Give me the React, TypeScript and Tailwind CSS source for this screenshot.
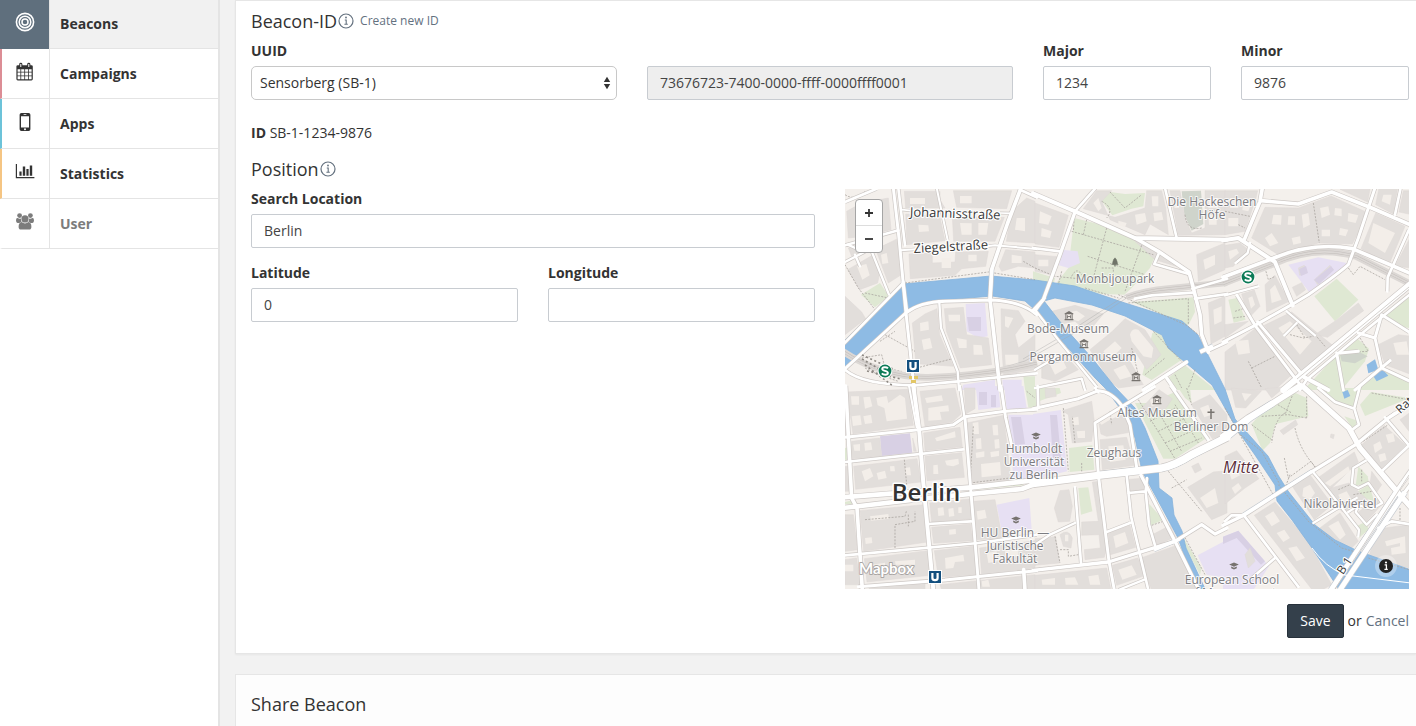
import React from 'react';

type Area = [fill: string, d: string];
type Road = [width: number, d: string];

interface Tile {
  x: number;
  y: number;
  areas: Area[];
  buildings: string;
  yards: string;
  rail?: string;
  roads: Road[];
  paths: string;
}

const PARK = '#dfe8d3';
const CAMPUS = '#e7e0f3';
const CAMPUS_DARK = '#d8d0e4';
const MEADOW = '#cfd4cb';
const WATER = '#8ebbe4';

// Tiles are drawn at three units per map pixel.
const TILES: Tile[] = [
  {
    x: 0,
    y: -1,
    areas: [
      [PARK, 'M48,320L105,285L132,325L90,358Z'],
      [CAMPUS, 'M362,348L420,345L428,445L400,450L365,430Z'],
      [CAMPUS, 'M355,590L450,575V606H350Z'],
      [CAMPUS, 'M472,575H530V606H474Z'],
      [PARK, 'M535,565H570V606H540Z'],
    ],
    buildings:
      'M5,70L50,45L130,30L138,125L60,145L10,150Z M178,10H285V35L300,60H182Z M325,8H500L485,62L335,58Z M182,78L284,84L300,158L186,170Z M322,86L478,88L450,160L326,160Z M192,198L262,194V225L330,222L332,192L430,190L422,235L350,242L330,262L196,272Z M8,245L82,202L105,250L98,285L44,305Z M92,184L158,152L166,262L130,285Z M482,185L570,192V240L520,235L470,250L462,235Z M500,70L545,30L570,40V165L484,160Z M0,325L50,372L62,392L0,440Z M202,405L240,378L276,362L284,440L325,535L225,528L212,520Z M298,362L355,358L365,440L430,450L440,530L346,540L304,430Z M468,362L520,368L540,400L510,440L520,480L570,440V545L476,560L470,470Z M10,180L40,172L48,190L20,205Z',
    yards:
      'M35,80L80,70L85,100L45,105Z M195,30H240V48H195Z M345,24H380V46H345Z M220,110L250,112L252,130L222,132Z M345,105L380,106V140L350,140Z M400,105L430,105L425,140L400,140Z M290,210H318V240H290Z M370,200L395,200V220H370Z M36,235L64,228L74,262L52,275Z M108,200L125,195L130,225L112,228Z M500,200L530,205V225H500Z M515,90L540,90V130L510,125Z M225,405L250,400L252,425L226,430Z M230,455L255,450L262,480L236,486Z M310,380H345V400H312Z M335,450L365,455V480L342,480Z M385,470L410,472L414,500L386,500Z M480,385L505,390L490,420L480,415Z M480,500L520,500V530H482Z',
    rail: 'M-6,490C60,535 160,570 250,568S480,550 576,525',
    roads: [
      [8, 'M0,42L95,2'],
      [8, 'M0,172L160,127'],
      [7, 'M0,222L58,192L8,170M30,200L45,235M80,190L132,320'],
      [8, 'M-6,470L175,285'],
      [9, 'M-6,548L182,375Q225,342 300,340L440,336Q530,340 575,380'],
      [9, 'M145,0L162,150L183,375L208,606'],
      [8, 'M160,0L180,172'],
      [11, 'M528,0L488,105L440,245L435,335L465,606'],
      [5, 'M170,65L200,68M465,75L500,76'],
      [6, 'M168,187L210,184M430,174L450,172L575,183M275,0L308,156'],
      [8, 'M525,5L575,28'],
      [7, 'M283,345L288,420L338,550L342,606'],
      [8, 'M0,545Q50,590 210,592L340,580L575,556'],
    ],
    paths:
      'M180,285L430,252L570,275M60,315L130,330M0,230L40,300L90,365M120,440L210,490M215,540L330,510M105,460L150,430M535,220L570,240M0,20Q30,40 60,10M50,510L110,500L120,540L170,550M60,540L100,560L160,580',
  },
  {
    x: 190,
    y: -1,
    areas: [
      [PARK, 'M118,90L205,112L350,175L362,200L345,240L290,300L268,320L200,318L60,290L100,240Z'],
      [PARK, 'M-6,250L60,270L56,292L-6,276Z'],
      [PARK, 'M290,342L476,328L480,372L460,412Z'],
      [PARK, 'M200,38L225,12L270,18L330,15L325,55L290,62L232,82Z'],
      [MEADOW, 'M440,10L498,8L505,108L470,128L448,80Z'],
      [PARK, 'M352,435L368,428L440,515L350,576L322,560Z'],
      [PARK, 'M448,530L542,606H410L400,570Z'],
      [CAMPUS, 'M80,185L128,190L135,225L100,240L72,232Z'],
    ],
    buildings:
      'M0,45L100,82L72,178L0,168Z M145,62L185,8H230L200,40L225,95L330,140L345,108L400,140L392,60L380,8H335L330,60L240,88Z M405,8H435L450,90L470,135L510,120V8H570V140L430,142Z M485,200L570,165V245L490,280Z M520,345L570,325V445L528,468Z M0,200L68,206L56,262L0,250Z M42,372L120,352L205,378L160,432L120,400L60,412Z M165,485L232,430L270,392L330,425L378,500L335,545L300,490L285,520L325,590L250,600L225,580Z M20,520L90,500L130,545L60,580L20,570Z M300,160L350,180L440,240L360,215Z',
    yards:
      'M15,70L50,85L40,110L12,105Z M20,120L50,130L45,150L18,145Z M175,45L190,30L200,60L190,70Z M250,98L275,105L270,118L250,112Z M300,80L330,75L335,100L305,110Z M350,25H370V55H352Z M355,75L380,72L385,95L358,100Z M415,30H432V60H418Z M520,30H550V60H520Z M520,80H545V110H522Z M505,215L540,200V230L510,245Z M535,365L560,355V400L538,410Z M10,215H40V235H10Z M90,375L125,368L150,385L130,400L100,390Z M205,490L240,460L260,480L225,515Z M285,440Q290,420 310,425L355,480L350,510L325,505L290,460Z M45,530L85,520L95,540L60,560Z M235,545L270,530L290,565L255,575Z',
    rail: 'M576,284L400,302Q330,308 275,328',
    roads: [
      [12, 'M-6,16L120,70L300,150L576,155'],
      [10, 'M120,72L75,200L25,335L-6,368'],
      [8, 'M120,70L182,0M390,0L425,150M-6,180L75,190'],
      [11, 'M300,150L370,190L462,252L475,300L495,380L500,440L520,492'],
      [8, 'M372,195L358,228L462,258M520,488L576,462M480,332L576,318'],
      [8, 'M300,332L350,322L472,314M472,302L576,272'],
      [11, 'M325,606L455,522'],
      [10, 'M395,570L420,606'],
      [7, 'M0,365L70,455L185,596M0,600L140,572L150,606M0,545L60,510'],
    ],
    paths:
      'M110,130L355,200M158,205L330,260M215,120L175,270M155,95L145,140M320,172L270,310M118,80L115,130M80,250L70,290M0,240L60,265L160,275M110,265Q125,235 140,260M200,40Q240,60 215,90M225,12L270,60L320,20M280,345L460,332V410M250,320L455,412L490,440M450,80Q455,130 500,120M355,430L440,520M290,480L310,560M200,240H235V260M330,560L390,510M420,560L440,600M480,545L460,600M150,300L250,330',
  },
  {
    x: 380,
    y: -1,
    areas: [
      [CAMPUS, 'M190,230L280,208L365,225L345,250L255,316Z'],
      [PARK, 'M268,325L335,272L400,335L330,400Z'],
      [PARK, 'M10,335L36,330L62,395L26,404Z'],
      [PARK, 'M212,410L268,445L225,492L182,440Z'],
      [PARK, 'M345,490L395,450L432,482L420,520L350,606H236Z'],
      [PARK, 'M474,380L552,330V420L520,415Z'],
      [PARK, 'M385,606L480,545L560,585V606Z'],
      [MEADOW, 'M345,500L398,490L428,505L390,526L350,520Z'],
      [WATER, 'M425,530L450,514L460,545L430,556Z'],
      [WATER, 'M443,562L474,545L490,563L455,580Z'],
    ],
    buildings:
      'M0,8H98L92,34L60,130L0,140Z M120,58L220,60L318,24L430,75L382,168L280,165L160,200L80,150Z M452,75L540,115L492,230L408,182Z M345,4H435L428,42Z M462,0L518,0L505,78L452,50Z M535,8H560V80L522,72Z M202,298L230,284L242,305L215,325Z M220,240L238,232L245,255L224,262Z M268,275L315,232L325,245L278,290Z M120,290L150,262L192,340L125,372Z M50,318L88,306L105,355L76,385L62,360Z M118,412L200,372L330,478L228,562Z M0,492L90,422L200,560L150,606H0Z M332,398L400,345L416,368L308,448L270,440Z M460,470L520,440L560,445V560L480,530Z M0,172L45,165L70,185L25,235L0,240Z M560,140V240L510,235Z M0,410L70,400L0,450Z',
    yards:
      'M15,30H40V60H15Z M55,40L80,42L70,70L52,66Z M10,90H40V115H10Z M145,80L170,82L168,110L140,108Z M190,85L210,85V110H188Z M230,80L250,75L255,110L235,120Z M285,60L310,55L315,80L290,90Z M330,60L350,62V85L328,82Z M370,75L400,82L392,105L368,100Z M120,150L140,135L160,165L135,175Z M200,150L225,145L228,165L205,170Z M290,125L315,125V145H290Z M345,120L370,125L362,145L342,140Z M445,105L510,135L480,195L430,165Z M475,20H500L495,50L470,40Z M135,305L150,290L170,335L140,345Z M70,330L82,325L90,350L78,362Z M160,420L195,400L260,460L225,500Z M30,460L70,455L75,495L40,500Z M505,465L545,460L552,500L515,500Z M10,190L35,182L42,195L15,215Z',
    rail: 'M-6,287L140,230Q270,168 395,206L560,290',
    roads: [
      [11, 'M-6,268L140,213Q260,160 382,182L560,258'],
      [12, 'M-6,157L40,150L150,222L203,352'],
      [11, 'M112,0L105,40L58,155'],
      [11, 'M108,38L220,48L320,12L440,60L560,112'],
      [9, 'M450,0L400,150L370,230Q330,265 250,320L200,350L90,412L-6,462'],
      [8, 'M527,0L510,80M552,125L488,268L487,310'],
      [9, 'M36,322L90,412L225,590M98,402L240,570'],
      [7, 'M185,370L270,442M215,405L178,442M75,165L68,195L32,225M0,322L100,295'],
      [9, 'M400,435L450,450L470,380L552,432M335,495L355,606M450,450L470,540L560,582M390,606L495,518'],
      [12, 'M225,560L310,606'],
      [18, 'M560,285L410,410L212,575L175,606'],
      [8, 'M560,315L430,420L245,575L225,606'],
      [9, 'M345,495L400,490'],
    ],
    paths:
      'M265,45L283,165M370,240L385,260L405,235L480,275M120,240L130,275L150,265M30,370L60,360M25,390L60,385M195,440L235,450L265,445M215,410L240,450M405,450L430,490L340,495M70,520L110,600M80,540L150,505M0,70L75,85M270,440L300,475M40,110L60,120',
  },
  {
    x: 0,
    y: 199,
    areas: [
      [CAMPUS, 'M392,-6H460L466,58L400,66Z'],
      [CAMPUS, 'M478,-6H535L545,60L485,64Z'],
      [CAMPUS_DARK, 'M105,145L195,136L202,194L110,204Z'],
      [CAMPUS, 'M490,80H575V285L505,270Z'],
      [CAMPUS, 'M455,350L553,330L560,425L470,430Z'],
      [PARK, 'M540,0H575V60L550,58Z'],
      [PARK, 'M0,180L10,178V215H0Z'],
      [PARK, 'M0,342L25,336V348H0Z'],
      [PARK, 'M382,298L535,285V292L384,306Z'],
    ],
    buildings:
      'M5,12L190,4L205,112L24,138Z M225,10L330,0L348,78L322,102L240,115Z M358,0H390V62L362,78Z M20,160L104,150L110,204L20,212Z M203,150L214,190H206Z M236,135L345,118L352,176L240,188Z M365,105L476,82L498,275L380,285Z M26,235L216,212L228,282L32,304Z M240,205L350,194L358,268L246,278Z M45,368L236,350L248,462L56,490Z M254,345L374,333L380,392L260,402Z M260,418L376,408L384,458L266,466Z M58,512L248,488L256,562L66,582Z M268,488L390,474L398,560L280,568Z M404,480L570,458V540L410,562Z M384,340L450,335L468,430L520,432L522,445L390,456Z M72,596L240,582V606H72Z M285,590L570,560V606H290Z M0,515L35,510L45,590H0Z M0,20H4L12,140L0,142Z M0,380H25L38,485L0,490Z M0,235H16L20,310H0Z',
    yards:
      'M18,25H42V50H20Z M55,28L75,26L82,55L60,62Z M94,30L125,24L130,45L165,20L180,30L186,92L125,100L118,60L98,52Z M20,85L46,82L50,110L24,114Z M55,85L78,80L82,105L60,108Z M240,30L290,22L294,38L245,45Z M250,60L310,52L312,70L285,72L290,95L250,98Z M25,170L45,168V188H28Z M58,165L78,163L82,185L60,188Z M270,150L330,130L332,148L275,160Z M383,105L400,102L402,138L385,138Z M442,112L458,110L460,142L445,142Z M392,152L408,150L410,182L394,184Z M448,155L462,153L464,180L450,182Z M392,194L418,190V206L394,210Z M436,192L462,188V204L438,208Z M408,228L465,222L468,262L410,268Z M50,250L75,240L85,265L60,280Z M95,255L120,248L125,270L100,275Z M135,235L148,234L150,250L136,250Z M180,240L195,238L198,262L184,262Z M265,232L278,230L280,258L265,258Z M300,218L340,212L342,228L325,235L305,232Z M75,385L130,378L132,392L78,398Z M60,450L80,448L82,465L62,468Z M278,360L295,358L298,382L280,384Z M310,362L325,360L328,384L312,386Z M340,358L350,358V375H340Z M312,425L332,423L333,438L313,440Z M80,530L120,524V545H84Z M150,520L210,515V530H152Z M300,510L355,500L358,520L330,522L325,540L302,542Z M425,495L455,490L458,520L430,525Z M480,488L520,484V505H482Z M395,370L420,365L425,390L398,395Z M410,580L430,575L435,596H412Z M0,530H25V550H0Z',
    roads: [
      [11, 'M2,-6L20,330L36,360L52,606'],
      [12, 'M205,-6L222,120L235,285L265,606'],
      [6, 'M192,-6L215,118'],
      [9, 'M0,148L220,125L325,110L360,86L480,70L575,64'],
      [8, 'M0,222L355,184'],
      [9, 'M360,90L376,290L402,606'],
      [7, 'M345,-6L358,86'],
      [9, 'M468,-6L482,90L502,180'],
      [8, 'M0,502L400,465L575,440M250,408L378,400'],
      [9, 'M40,596L300,576L575,548'],
      [11, 'M536,545L540,606'],
      [14, 'M-6,328L380,298L575,276'],
      [14, 'M-6,360L250,330L530,303L575,286'],
    ],
    paths:
      'M178,215L185,290M385,300L535,288M60,395L180,385L184,370M150,480V410L210,400V370M190,380V415M545,10L570,30M385,115L375,285L495,270',
  },
  {
    x: 190,
    y: 199,
    areas: [
      [CAMPUS, 'M-6,78L78,66L96,250L-6,275Z'],
      [CAMPUS, 'M488,502L576,455V570L515,560Z'],
      [PARK, 'M102,180L172,172L178,245L104,252Z'],
      [PARK, 'M130,300L160,298L172,370L138,380Z'],
      [PARK, 'M12,0H74L78,15L12,40Z'],
      [PARK, 'M340,345L385,395L348,412Z'],
      [PARK, 'M300,45L345,45L420,12L515,150L420,212L385,212Z'],
      [PARK, 'M430,0H465L470,45L450,30Z'],
      [PARK, 'M440,440L500,540L495,560L440,455Z'],
    ],
    buildings:
      'M82,68L170,40L178,100L170,160L112,165L100,80Z M192,108L265,80L290,132L215,145L198,138Z M195,155L275,148L298,232L202,245Z M75,308L102,305L112,355L104,400L70,402L58,360Z M172,282L195,280L215,480L208,508L150,515L148,485L196,480L192,440L140,442L140,402L190,400Z M75,440Q100,420 112,450L108,480L85,475Z M220,435L285,412L302,478L226,500Z M312,512L430,470L500,606H350Z M232,532L308,510L332,562L245,592Z M458,298L535,252L576,248V375L530,395Z M0,452L62,446L74,525L0,532Z M0,562L215,540L228,606H0Z M352,440L406,412L422,446L368,470Z M468,48L525,20L576,80V140L532,152Z M318,62L372,5L412,32L392,62L332,80Z M470,235L490,225L500,245L480,255Z M270,275L330,270L332,305L280,308Z M30,2L60,0L64,25L32,30Z',
    yards:
      'M110,90L130,86L132,110L114,112Z M125,130L150,128V150H128Z M180,90L210,75L225,95L200,110Z M220,175L265,172L272,215L225,222Z M495,330L540,300L550,345L515,360Z M250,545L290,532L305,560L262,575Z M20,575L60,570V590H22Z M90,570L120,568L130,590H92Z M160,565L190,560L196,590H165Z M345,35L370,25L378,45L350,55Z M90,440L100,440V460H90Z M495,60L520,50L530,80L508,88Z M235,445L270,432L280,465L242,480Z',
    roads: [
      [9, 'M-6,62L130,32L190,8Q230,10 262,55L285,110L305,238'],
      [9, 'M358,-4L180,105L190,260L222,520L238,606'],
      [8, 'M180,0L190,12M8,-6L10,60'],
      [9, 'M408,-6L520,155'],
      [8, 'M120,298L138,525'],
      [10, 'M-6,547L220,522L420,460L500,410L540,438L576,420'],
      [10, 'M318,262L420,460L492,606'],
      [8, 'M275,262L288,385L340,606M280,315L332,310L336,270M332,310L342,410L360,472M215,432L285,405'],
      [7, 'M0,470L45,440L120,405M250,606L328,575'],
      [22, 'M-6,287L190,262L380,240Q420,232 470,200L576,148'],
    ],
    paths:
      'M85,60L100,250M120,165L112,85M60,445L75,525M75,485H100V505L130,500M140,225V250M225,70L230,110M310,35L420,212M345,100L420,60M370,130L450,90M390,165L480,125M405,190L500,150M420,50L490,165M375,80L440,190M455,0L470,50M350,412L385,400M445,440L510,560M400,250L500,370M410,300L455,275',
  },
  {
    x: 380,
    y: 199,
    areas: [
      [PARK, 'M80,108L120,62L200,10L245,30L250,85L152,108L135,165L112,188Z'],
      [PARK, 'M268,0L402,0L395,60L345,48L320,30Z'],
      [PARK, 'M405,50L438,12L552,30L510,48L420,84Z'],
      [PARK, 'M358,85L398,98L385,125Z'],
      [PARK, 'M400,235L428,265L432,288L392,292Z'],
      [PARK, 'M385,318L432,290L448,340L400,325Z'],
      [PARK, 'M395,415L424,400L430,425L402,450Z'],
      [PARK, 'M368,596H450V606H360Z'],
      [CAMPUS, 'M-6,446L40,428L132,535L85,606H-6Z'],
      [CAMPUS_DARK, 'M-6,446L40,428L120,520L108,530L35,450L-6,468Z'],
      [WATER, 'M352,12L368,6L376,24L358,32Z'],
    ],
    buildings:
      'M0,205L35,188L102,272L60,300L0,348Z M88,382L150,342L250,460L320,590L290,606H262Z M200,292L256,262L322,350L268,395Z M275,272L388,192L400,222L308,312Z M282,422L345,375L400,460L372,488Z M408,172L478,112L542,172L470,242Z M440,480L480,420L552,410V540L430,510Z M300,305L372,285L445,350L352,372Z M18,0L110,8L62,60L32,58Z M165,128L212,96L218,110L175,140Z M400,372L460,330L470,350L425,400Z M318,138L328,140L325,152L316,148Z M60,500L75,480L90,520L70,540Z M440,250L470,290L450,320L435,290Z M120,2L180,-4L140,30Z M525,95L560,70V140Z',
    yards:
      'M10,245L30,235L45,262L20,275Z M20,300L40,285L50,300L30,318Z M120,385L145,370L165,400L140,415Z M155,435L178,425L195,450L175,462Z M190,480L215,475L240,510L215,520Z M235,300L255,290L270,315L255,335L232,325Z M300,285L370,235L375,250L315,295Z M310,415L340,398L362,440L345,455Z M445,170L465,160L472,180L450,195Z M482,140L505,135L510,160L490,165Z M460,200L480,195L485,215L466,222Z M480,460L540,445L542,495L500,500L498,480L525,475V465L485,475Z M340,320L365,310L380,335L350,345Z M50,15L80,18L60,40Z',
    roads: [
      [10, 'M-6,412L60,380L262,250L392,170L490,90L560,45'],
      [18, 'M225,-6L140,48L70,90L-6,145'],
      [8, 'M55,380L220,596M150,510L75,575M0,400L20,382H50'],
      [7, 'M262,250L312,310L402,425L400,445M422,218L385,240L380,290L400,300L430,285L472,345L440,362L400,352L370,372M265,405L330,365L395,330M400,352L392,372L425,410L455,380'],
      [8, 'M460,420L500,400L560,410M480,88L552,172L470,250M280,0L330,42L388,62L402,110L375,130M405,-6L388,60M490,90L510,75'],
      [16, 'M232,-6L372,120L405,180L520,315L562,362'],
      [12, 'M560,245L500,330L318,606'],
      [10, 'M560,285L515,345L345,606'],
    ],
    paths:
      'M80,110L140,155M110,85L190,80L245,90M150,45L200,75M205,15L180,80M245,25V90M180,75Q150,90 140,165M178,210L190,270L258,220L275,245M160,290L250,400L350,480L420,500M340,305L375,290M40,135L110,190L165,290M0,60L150,330M415,160L490,110M440,15L550,35M525,360V400M195,260L180,300M410,245V280M385,320L440,310M430,510L552,545M210,120Q225,190 275,240',
  },
];

const RIVER =
  'M-2,153L58,95L146,87L190,91L230,97L280,114L337,132L353,146L363,166L380,200L390,230L413,256L423,267L433,286L443,302L470,336L490,351L513,362L566,381V402H495L467,359L447,331L432,312L430,296L410,266L393,242L380,219L367,196L347,179L323,159L317,146L280,127L247,116L210,109L199,112L220,139L247,169L270,198L290,219L300,239L313,272L314,299L327,309L329,326L337,342L341,359L361,402H352L333,349L317,319L297,282L290,249L280,226L260,199L250,189L223,159L190,121L180,112L147,107L100,111L70,117L50,132L-2,181Z';

const BRIDGES: Road[] = [
  [3, 'M58,92L62,124M147,80L145,112M200,108L190,122'],
  [4, 'M355,163L368,157'],
  [6, 'M253,286L317,279Q330,277 347,266L382,248L405,229L428,214'],
  [3, 'M398,326L467,282M309,361L335,350'],
  [5, 'M486,401L552,303M495,401L560,303'],
];

interface PlaceLabel {
  x: number;
  y: number;
  lines: string[];
}

const PLACES: PlaceLabel[] = [
  { x: 367, y: 17, lines: ['Die Hackeschen', 'Höfe'] },
  { x: 270, y: 94, lines: ['Monbijoupark'] },
  { x: 223, y: 144, lines: ['Bode-Museum'] },
  { x: 238, y: 172, lines: ['Pergamonmuseum'] },
  { x: 312, y: 228, lines: ['Altes Museum'] },
  { x: 366, y: 242, lines: ['Berliner Dom'] },
  { x: 269, y: 268, lines: ['Zeughaus'] },
  { x: 189, y: 264, lines: ['Humboldt', 'Universität', 'zu Berlin'] },
  { x: 170, y: 348, lines: ['HU Berlin —', 'Juristische', 'Fakultät'] },
  { x: 495, y: 319, lines: ['Nikolaiviertel'] },
  { x: 387, y: 395, lines: ['European School', 'of Management'] },
];

const MUSEUMS: [number, number][] = [
  [224, 127],
  [239, 155],
  [291, 188],
  [312, 211],
];

const SCHOOLS: [number, number][] = [
  [191, 247],
  [171, 331],
  [389, 377],
];

function tileTransform(tile: Tile) {
  return `translate(${tile.x} ${tile.y}) scale(0.33333)`;
}

function SBahn({ x, y }: { x: number; y: number }) {
  return (
    <g transform={`translate(${x} ${y})`}>
      <circle r="7.4" fill="#fff" />
      <circle r="6.4" fill="#0b7a56" />
      <path
        d="M3,-2.6C1.6,-4.2 -2.8,-4.3 -2.8,-1.9C-2.8,0.4 2.9,-0.6 2.9,2C2.9,4.4 -1.8,4.2 -3.2,2.4"
        fill="none"
        stroke="#fff"
        strokeWidth="1.9"
      />
    </g>
  );
}

function UBahn({ x, y }: { x: number; y: number }) {
  return (
    <g transform={`translate(${x} ${y})`}>
      <rect x="-7" y="-7" width="14" height="14" fill="#fff" />
      <rect x="-6" y="-6" width="12" height="12" fill="#14507f" />
      <path d="M-2.6,-4V1Q-2.6,3.2 0,3.2T2.6,1V-4" fill="none" stroke="#fff" strokeWidth="2.2" />
    </g>
  );
}

function CityMap() {
  return (
    <svg
      viewBox="0 0 564 400"
      preserveAspectRatio="xMidYMid slice"
      className="block h-full w-full font-['Open_Sans',sans-serif]"
      role="img"
      aria-label="Map of Berlin"
    >
      <rect x="-600" y="-400" width="1800" height="1200" fill="#f4f0ec" />
      {TILES.map((t, i) => (
        <g key={i} transform={tileTransform(t)}>
          {t.areas.map(([fill, d], k) => (
            <path key={k} d={d} fill={fill} />
          ))}
          <path d={t.buildings} fill="#e2dedb" stroke="#ded9d6" strokeWidth="1.5" />
          <path d={t.yards} fill="#f3eee9" />
        </g>
      ))}
      <g fill={CAMPUS_DARK}>
        <path d="M122,128H136V142H124Z M454,80L461,77L463,84L456,87Z M469,91L486,77L489,81L474,95Z M205,226H212L216,270L208,272Z M166,228H176L180,255L170,256Z M134,203H142V216H134Z M146,206H151V218H146Z" />
      </g>
      <path d={RIVER} fill={WATER} stroke="#85b3dc" strokeWidth="0.8" />
      <path
        d="M283,108L226,146L180,172L140,184M281,106L224,143L178,170"
        fill="none"
        stroke="#a8a8a8"
        strokeOpacity="0.6"
        strokeWidth="0.7"
      />
      {TILES.map((t, i) => (
        <g key={i} transform={tileTransform(t)} fill="none">
          <path d={t.paths} stroke="#a9a5a0" strokeWidth="2.4" strokeDasharray="6 4" />
          {t.rail && (
            <>
              <path d={t.rail} stroke="#dcd8d5" strokeWidth="20" />
              <path d={t.rail} stroke="#c4bfbc" strokeWidth="8" />
              <path d={t.rail} stroke="#dcd8d5" strokeWidth="5" />
            </>
          )}
        </g>
      ))}
      {TILES.map((t, i) => (
        <g key={i} transform={tileTransform(t)} fill="none" stroke="#cdc8c5" strokeLinejoin="round">
          {t.roads.map(([w, d], k) => (
            <path key={k} d={d} strokeWidth={w + 4} />
          ))}
        </g>
      ))}
      <g fill="none" stroke="#c5cad0">
        {BRIDGES.map(([w, d], k) => (
          <path key={k} d={d} strokeWidth={w + 1.4} />
        ))}
      </g>
      {TILES.map((t, i) => (
        <g key={i} transform={tileTransform(t)} fill="none" stroke="#fff" strokeLinejoin="round" strokeLinecap="round">
          {t.roads.map(([w, d], k) => (
            <path key={k} d={d} strokeWidth={w} />
          ))}
        </g>
      ))}
      <g fill="none" stroke="#fff">
        {BRIDGES.map(([w, d], k) => (
          <path key={k} d={d} strokeWidth={w} />
        ))}
      </g>
      <g fill="none" stroke="#c9c4c0" strokeWidth="0.8">
        <path d="M564,98L452,190M564,286L490,400" />
      </g>
      <path d="M467,359Q480,378 500,386L566,394" fill="none" stroke="#fff" strokeWidth="1" />
      <g stroke="#8d8883" strokeWidth="0.9" strokeDasharray="2 2.5" fill="none">
        <path d="M17,166L48,180M17,170L52,190M20,176L48,197M22,182L56,190" strokeWidth="1.6" />
      </g>
      <g fill="#e3c766">
        <rect x="64" y="187" width="3" height="3" />
        <rect x="69" y="187" width="4" height="3" />
        <rect x="66" y="191" width="5" height="3" />
      </g>

      <g
        fontSize="12"
        fill="#7c7c80"
        stroke="#fff"
        strokeOpacity="0.75"
        strokeWidth="2"
        paintOrder="stroke"
        strokeLinejoin="round"
        textAnchor="middle"
      >
        {PLACES.map((p) =>
          p.lines.map((line, k) => (
            <text key={line} x={p.x} y={p.y + k * 13}>
              {line}
            </text>
          )),
        )}
      </g>
      <g
        fontSize="12"
        fill="#3a3a3a"
        stroke="#fff"
        strokeWidth="2.2"
        paintOrder="stroke"
        strokeLinejoin="round"
        textAnchor="middle"
      >
        <text fontSize="13" transform="translate(110 29) rotate(2)">
          Johannisstraße
        </text>
        <text fontSize="13" transform="translate(106 62) rotate(-3)">
          Ziegelstraße
        </text>
        <text transform="translate(503 379) rotate(-56)">B 1</text>
        <text transform="translate(562 219) rotate(-42)">Rat</text>
      </g>
      <text
        x="396"
        y="284"
        fontSize="16"
        fontStyle="italic"
        fill="#5b2f3c"
        stroke="#fff"
        strokeWidth="2"
        paintOrder="stroke"
        textAnchor="middle"
      >
        Mitte
      </text>
      <text
        x="81"
        y="312"
        fontSize="24"
        fontWeight="600"
        fill="#333"
        stroke="#fff"
        strokeWidth="3"
        paintOrder="stroke"
        strokeLinejoin="round"
        textAnchor="middle"
      >
        Berlin
      </text>

      {MUSEUMS.map(([x, y]) => (
        <g key={x} transform={`translate(${x} ${y})`} fill="#77736f">
          <path d="M0,-5L4.4,-2.6V-1.8H-4.4V-2.6Z M-3.6,-1.8H-2.6V3H-3.6Z M2.6,-1.8H3.6V3H2.6Z M-4.4,3H4.4V4.2H-4.4Z" />
          <path d="M-1.5,2.4V-0.4L0,1L1.5,-0.4V2.4" fill="none" stroke="#77736f" strokeWidth="0.9" />
        </g>
      ))}
      {SCHOOLS.map(([x, y]) => (
        <g key={x} transform={`translate(${x} ${y})`} fill="#77736f">
          <path d="M0,-3.6L4.8,-1.4L0,0.8L-4.8,-1.4Z M-2.8,0.4L0,1.7L2.8,0.4V2.2L0,3.6L-2.8,2.2Z" />
        </g>
      ))}
      <path
        transform="translate(270 73)"
        fill="#6f7468"
        d="M0,-4.5L2.4,-1.6H1.5L3.2,0.6H2L3.6,2.8H0.6V4.4H-0.6V2.8H-3.6L-2,0.6H-3.2L-1.5,-1.6H-2.4Z"
      />
      <path d="M366,220V230M362.5,223.3H369.5" stroke="#77736f" strokeWidth="1.5" />

      <SBahn x={403} y={88} />
      <SBahn x={40} y={182} />
      <UBahn x={68} y={177} />
      <UBahn x={90} y={388} />

      <text
        x="14"
        y="385"
        fontSize="15"
        fontWeight="700"
        fill="#fff"
        stroke="#a9a5a3"
        strokeWidth="1.8"
        paintOrder="stroke"
        strokeLinejoin="round"
        className="font-[Lato,sans-serif]"
      >
        Mapbox
      </text>
    </svg>
  );
}

function InfoIcon() {
  return (
    <svg viewBox="0 0 16 16" className="ml-px size-4 shrink-0" fill="none" stroke="#64717f" aria-hidden="true">
      <circle cx="8" cy="8" r="7" strokeWidth="1.2" />
      <path d="M6.8,7H8.2V11.2M6.4,11.3H9.8" strokeWidth="1.1" />
      <circle cx="8" cy="4.5" r="0.9" fill="#64717f" stroke="none" />
    </svg>
  );
}

function BeaconIcon() {
  return (
    <svg viewBox="0 0 20 20" className="size-5" fill="none" stroke="#fff" aria-hidden="true">
      <circle cx="10" cy="10" r="8.6" strokeWidth="1.6" />
      <circle cx="10" cy="10" r="5.8" strokeWidth="1.5" />
      <circle cx="10" cy="10" r="3" strokeWidth="1.5" />
    </svg>
  );
}

function CalendarIcon() {
  return (
    <svg viewBox="0 0 20 20" className="size-5" aria-hidden="true">
      <path
        fill="currentColor"
        fillRule="evenodd"
        d="M2.8,3.2H4.2V2.2Q4.2,0.8 5.8,0.8T7.4,2.2V3.2H12.2V2.2Q12.2,0.8 13.8,0.8T15.4,2.2V3.2H16.4Q17.8,3.2 17.8,4.6V17Q17.8,18.4 16.4,18.4H2.8Q1.4,18.4 1.4,17V4.6Q1.4,3.2 2.8,3.2Z M2.6,7.2V9.8H5.4V7.2Z M6.2,7.2V9.8H9.3V7.2Z M10.1,7.2V9.8H13.2V7.2Z M14,7.2V9.8H16.6V7.2Z M2.6,10.6V13.4H5.4V10.6Z M6.2,10.6V13.4H9.3V10.6Z M10.1,10.6V13.4H13.2V10.6Z M14,10.6V13.4H16.6V10.6Z M2.6,14.2V17.2H5.4V14.2Z M6.2,14.2V17.2H9.3V14.2Z M10.1,14.2V17.2H13.2V14.2Z M14,14.2V17.2H16.6V14.2Z"
      />
      <path d="M5.8,2V5M13.8,2V5" stroke="#fff" strokeWidth="1" />
    </svg>
  );
}

function PhoneIcon() {
  return (
    <svg viewBox="0 0 20 20" className="size-5" aria-hidden="true">
      <path
        fill="currentColor"
        fillRule="evenodd"
        d="M6.4,1H13.6Q15.4,1 15.4,2.8V17.2Q15.4,19 13.6,19H6.4Q4.6,19 4.6,17.2V2.8Q4.6,1 6.4,1Z M6,4.2V15.4H14V4.2Z M8.6,2.3V2.9H11.4V2.3Z M10,16.2A1,1 0 1 0 10,18.2A1,1 0 1 0 10,16.2Z"
      />
    </svg>
  );
}

function ChartIcon() {
  return (
    <svg viewBox="0 0 20 20" className="size-5" fill="currentColor" aria-hidden="true">
      <path d="M0.8,2H2V15H19.4V16.2H0.8Z M4.4,9.4H6.6V13.8H4.4Z M7.8,4.6H10.2V13.8H7.8Z M11.4,7H13.6V13.8H11.4Z M14.8,3.4H17.2V13.8H14.8Z" />
    </svg>
  );
}

function UsersIcon() {
  return (
    <svg viewBox="0 0 20 20" className="size-5" fill="currentColor" aria-hidden="true">
      <circle cx="4.6" cy="3.6" r="2.4" />
      <circle cx="15.4" cy="3.6" r="2.4" />
      <path d="M1,8.4Q1,5.8 2.6,6Q4.6,7.2 6,6.4Q5.6,8 6.6,9.8Q5.2,10 4.4,11H2.6Q1,10.8 1,8.4Z M19,8.4Q19,5.8 17.4,6Q15.4,7.2 14,6.4Q14.4,8 13.4,9.8Q14.8,10 15.6,11H17.4Q19,10.8 19,8.4Z" />
      <circle cx="10" cy="6.9" r="3.6" />
      <path d="M6.6,10.1Q10,12.7 13.4,10.1Q16.4,10.6 16.4,14.8Q16.4,17.6 14.2,17.6H5.8Q3.6,17.6 3.6,14.8Q3.6,10.6 6.6,10.1Z" />
    </svg>
  );
}

const NAV = [
  {
    label: 'Beacons',
    Icon: BeaconIcon,
    row: 'h-[49px] bg-[#f1f1f1]',
    cell: 'bg-[#5f6f7d] border-[#5f6f7d]',
    text: 'text-[#333]',
  },
  {
    label: 'Campaigns',
    Icon: CalendarIcon,
    row: 'h-[50px]',
    cell: 'border-l-[#dc8d95] border-b-[#e4e4e4]',
    text: 'text-[#333]',
  },
  {
    label: 'Apps',
    Icon: PhoneIcon,
    row: 'h-[50px]',
    cell: 'border-l-[#6cc3d9] border-b-[#e4e4e4]',
    text: 'text-[#333]',
  },
  {
    label: 'Statistics',
    Icon: ChartIcon,
    row: 'h-[50px]',
    cell: 'border-l-[#f5c583] border-b-[#e4e4e4]',
    text: 'text-[#333]',
  },
  {
    label: 'User',
    Icon: UsersIcon,
    row: 'h-[50px]',
    cell: 'border-l-white border-b-[#e4e4e4]',
    text: 'text-[#7c7c7c]',
  },
];

function Sidebar() {
  return (
    <nav className="w-[220px] shrink-0 border-r-2 border-[#e4e4e4] bg-white">
      {NAV.map(({ label, Icon, row, cell, text }) => (
        <a key={label} href="#" className={`flex ${row} ${text}`}>
          <span className={`flex w-[49px] shrink-0 items-center border-b border-l-2 pr-0.5 pb-1 ${cell}`}>
            <span className="flex w-full justify-center">
              <Icon />
            </span>
          </span>
          <span className="flex flex-1 items-center border-b border-l border-[#e4e4e4] pl-2.5 text-sm font-bold">
            {label}
          </span>
        </a>
      ))}
    </nav>
  );
}

const INPUT =
  'block h-[34px] w-full rounded-xs border border-[#c8ccd1] px-3 pb-0.5 text-sm text-[#444] outline-none';

function Field({
  id,
  label,
  value,
  className = '',
}: {
  id: string;
  label: string;
  value: string;
  className?: string;
}) {
  return (
    <div className={className}>
      <label htmlFor={id} className="mb-[5px] block text-sm font-bold">
        {label}
      </label>
      <input id={id} type="text" defaultValue={value} className={`${INPUT} bg-white`} />
    </div>
  );
}

export default function App() {
  return (
    <div className="flex min-h-screen bg-[#f2f2f2] font-['Open_Sans',sans-serif] text-sm/5 text-[#333]">
      <Sidebar />
      <main className="flex min-w-0 flex-1 flex-col gap-5 pl-[15px]">
        <form
          className="border-y border-l border-[#e6e6e6] bg-white pt-2.5 pr-[7px] pb-[15px] pl-[15px] shadow-xs"
          onSubmit={(e) => e.preventDefault()}
        >
          <div className="flex items-center">
            <h2 className="text-lg/5">Beacon-ID</h2>
            <InfoIcon />
            <a href="#" className="ml-1.5 text-xs/5 text-[#64717f]">
              Create new ID
            </a>
          </div>

          <div className="mt-2.5 grid grid-cols-12 items-end gap-x-[30px]">
            <div className="col-span-4">
              <label htmlFor="uuid" className="mb-[5px] block text-sm font-bold">
                UUID
              </label>
              <div className="relative">
                <select
                  id="uuid"
                  className="block h-[34px] w-full appearance-none rounded-[5px] border border-[#c8c8c8] bg-white pr-6 pl-2 text-sm text-[#333] outline-none"
                >
                  <option>Sensorberg (SB-1)</option>
                </select>
                <svg
                  viewBox="0 0 8 14"
                  className="pointer-events-none absolute top-2.5 right-1.5 h-3.5 w-2"
                  fill="#333"
                  aria-hidden="true"
                >
                  <path d="M4,0.8L7.2,6H0.8Z M4,13.2L0.8,8H7.2Z" />
                </svg>
              </div>
            </div>
            <div className="col-span-4">
              <input
                type="text"
                aria-label="UUID value"
                readOnly
                value="73676723-7400-0000-ffff-0000ffff0001"
                className={`${INPUT} bg-[#eee]`}
              />
            </div>
            <Field id="major" label="Major" value="1234" className="col-span-2" />
            <Field id="minor" label="Minor" value="9876" className="col-span-2" />
          </div>

          <p className="mt-[23px]">
            <b>ID</b> SB-1-1234-9876
          </p>

          <div className="mt-4 flex items-center">
            <h2 className="text-lg/5">Position</h2>
            <InfoIcon />
          </div>

          <div className="mt-2.5 grid grid-cols-2 gap-x-[30px]">
            <div className="flex flex-col gap-[15px]">
              <Field id="location" label="Search Location" value="Berlin" />
              <div className="grid grid-cols-2 gap-x-[30px]">
                <Field id="latitude" label="Latitude" value="0" />
                <Field id="longitude" label="Longitude" value="" />
              </div>
            </div>
            <div className="relative h-[400px] overflow-hidden">
              <CityMap />
              <div className="absolute top-2.5 left-2.5 flex w-7 flex-col rounded border border-[#a5a5a5] bg-white">
                <button
                  type="button"
                  aria-label="Zoom in"
                  className="flex h-[26px] items-center justify-center border-b border-[#ddd]"
                >
                  <svg viewBox="0 0 8 8" className="size-2" stroke="#333" strokeWidth="1.8" aria-hidden="true">
                    <path d="M4,0V8M0,4H8" />
                  </svg>
                </button>
                <button type="button" aria-label="Zoom out" className="flex h-[26px] items-center justify-center">
                  <svg viewBox="0 0 8 8" className="size-2" stroke="#333" strokeWidth="1.8" aria-hidden="true">
                    <path d="M0,4H8" />
                  </svg>
                </button>
              </div>
              <button
                type="button"
                aria-label="Map information"
                className="absolute right-3 bottom-3 flex size-[22px] items-center justify-center rounded-full bg-white/30"
              >
                <svg viewBox="0 0 14 14" className="size-3.5" aria-hidden="true">
                  <circle cx="7" cy="7" r="7" fill="#222" />
                  <path d="M5.6,5.9H7.4V10M5.4,10.4H8.8" stroke="#fff" strokeWidth="1.3" fill="none" />
                  <circle cx="7" cy="3.5" r="1.1" fill="#fff" />
                </svg>
              </button>
            </div>
          </div>

          <div className="mt-[15px] flex items-center justify-end gap-1">
            <button
              type="submit"
              className="h-[34px] rounded-xs border border-[#27313b] bg-[#34404b] px-3 text-sm text-white"
            >
              Save
            </button>
            <span>or</span>
            <a href="#" className="text-[#64717f]">
              Cancel
            </a>
          </div>
        </form>

        <section className="flex-1 border-t border-l border-[#e6e6e6] bg-[#fdfdfd] px-[15px] pt-[19px]">
          <h2 className="text-lg/5">Share Beacon</h2>
        </section>
      </main>
    </div>
  );
}
